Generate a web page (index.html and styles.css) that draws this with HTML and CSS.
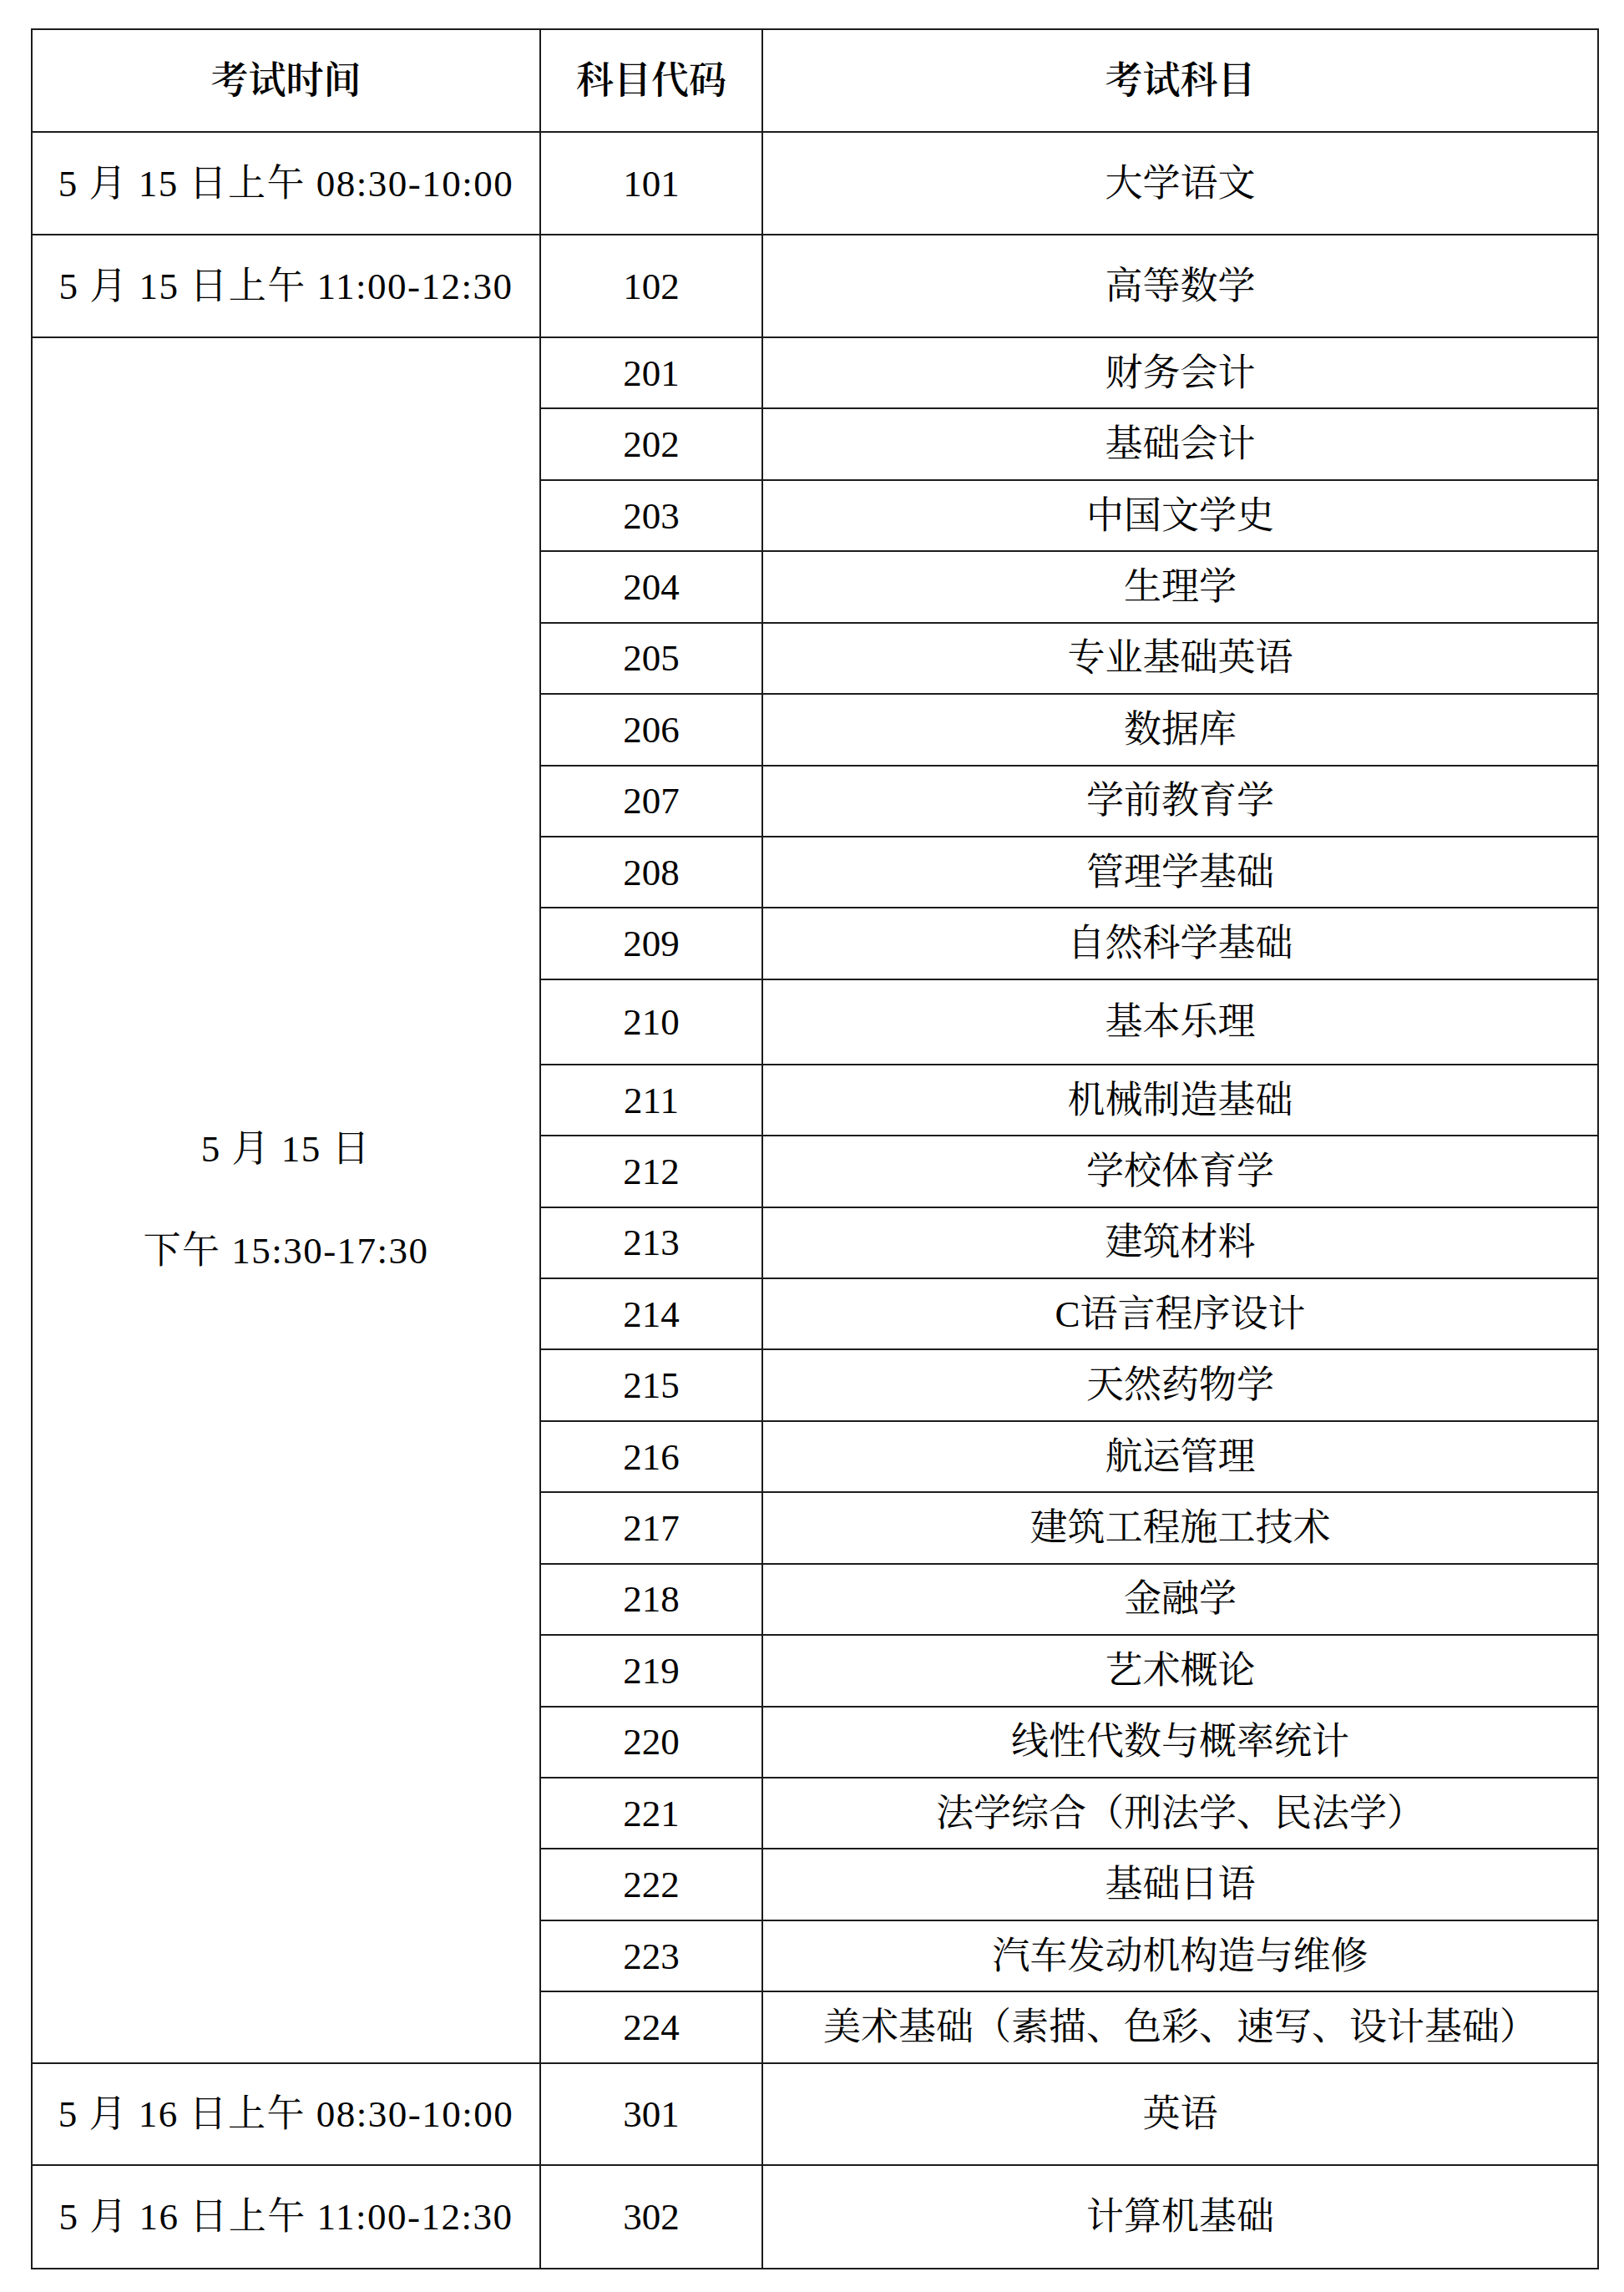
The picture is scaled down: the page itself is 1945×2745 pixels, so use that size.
FILE: index.html
```html
<!DOCTYPE html>
<html lang="zh-CN">
<head>
<meta charset="utf-8">
<title>考试时间安排</title>
<link rel="stylesheet" href="styles.css">
</head>
<body>
<div class="page">
<table class="schedule">
  <colgroup>
    <col class="c-time">
    <col class="c-code">
    <col class="c-subj">
  </colgroup>
  <thead>
    <tr class="tall">
      <th>考试时间</th>
      <th>科目代码</th>
      <th>考试科目</th>
    </tr>
  </thead>
  <tbody>
    <tr class="tall"><td class="time">5 月 15 日上午 08:30-10:00</td><td>101</td><td>大学语文</td></tr>
    <tr class="tall"><td class="time">5 月 15 日上午 11:00-12:30</td><td>102</td><td>高等数学</td></tr>
    <tr class="row">
      <td class="time" rowspan="24"><span class="line">5 月 15 日</span><span class="line gap">下午 15:30-17:30</span></td>
      <td>201</td><td>财务会计</td>
    </tr>
    <tr class="row"><td>202</td><td>基础会计</td></tr>
    <tr class="row"><td>203</td><td>中国文学史</td></tr>
    <tr class="row"><td>204</td><td>生理学</td></tr>
    <tr class="row"><td>205</td><td>专业基础英语</td></tr>
    <tr class="row"><td>206</td><td>数据库</td></tr>
    <tr class="row"><td>207</td><td>学前教育学</td></tr>
    <tr class="row"><td>208</td><td>管理学基础</td></tr>
    <tr class="row"><td>209</td><td>自然科学基础</td></tr>
    <tr class="mid"><td>210</td><td>基本乐理</td></tr>
    <tr class="row"><td>211</td><td>机械制造基础</td></tr>
    <tr class="row"><td>212</td><td>学校体育学</td></tr>
    <tr class="row"><td>213</td><td>建筑材料</td></tr>
    <tr class="row"><td>214</td><td>C语言程序设计</td></tr>
    <tr class="row"><td>215</td><td>天然药物学</td></tr>
    <tr class="row"><td>216</td><td>航运管理</td></tr>
    <tr class="row"><td>217</td><td>建筑工程施工技术</td></tr>
    <tr class="row"><td>218</td><td>金融学</td></tr>
    <tr class="row"><td>219</td><td>艺术概论</td></tr>
    <tr class="row"><td>220</td><td>线性代数与概率统计</td></tr>
    <tr class="row"><td>221</td><td>法学综合（刑法学、民法学）</td></tr>
    <tr class="row"><td>222</td><td>基础日语</td></tr>
    <tr class="row"><td>223</td><td>汽车发动机构造与维修</td></tr>
    <tr class="row"><td>224</td><td>美术基础（素描、色彩、速写、设计基础）</td></tr>
    <tr class="tall2"><td class="time">5 月 16 日上午 08:30-10:00</td><td>301</td><td>英语</td></tr>
    <tr class="tall3"><td class="time">5 月 16 日上午 11:00-12:30</td><td>302</td><td>计算机基础</td></tr>
  </tbody>
</table>
</div>
</body>
</html>
```

FILE: styles.css
```css
html, body {
  margin: 0;
  padding: 0;
  background: #ffffff;
}

.page {
  padding: 34px 0 0 37px;
}

.schedule {
  border-collapse: collapse;
  table-layout: fixed;
  width: 1878px;
  font-family: "Liberation Serif", "Noto Serif CJK SC", "Noto Sans CJK SC", serif;
  font-size: 45px;
  color: #000;
}

.c-time { width: 609px; }
.c-code { width: 266px; }
.c-subj { width: 1001px; }

.schedule th,
.schedule td {
  border: 2px solid #1c1c1c;
  padding: 0;
  text-align: center;
  vertical-align: middle;
  white-space: nowrap;
  line-height: 1.2;
}

.schedule th {
  font-weight: 600;
}

.schedule td.time {
  letter-spacing: 1.5px;
}

.tall { height: 123px; }
.tall2 { height: 122px; }
.tall3 { height: 124px; }
.row { height: 85.43px; }
.mid { height: 102px; }

.line {
  display: block;
  line-height: 61px;
}

.line.gap {
  margin-top: 61px;
}
```
